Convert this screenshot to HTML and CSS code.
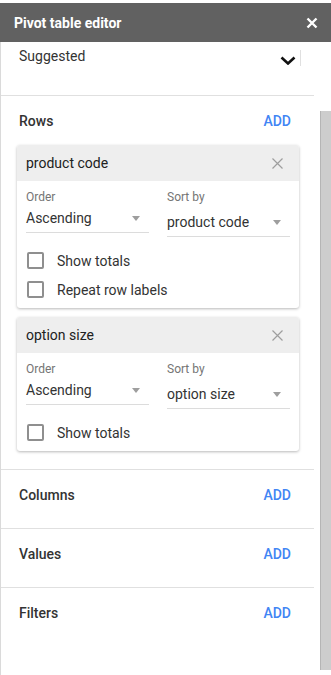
FILE: index.html
```html
<!DOCTYPE html>
<html lang="en">
<head>
  <meta charset="UTF-8">
  <meta name="viewport" content="width=device-width, initial-scale=1.0">
  <title>Pivot table editor</title>
  <link rel="stylesheet" href="styles.css">
</head>
<body>
  <div class="header">
    <span class="header-title">Pivot table editor</span>
    <svg class="header-close" width="12" height="12" viewBox="0 0 12 12">
      <path d="M1.5 1.5 L10.5 10.5 M10.5 1.5 L1.5 10.5" stroke="#fff" stroke-width="2.4" fill="none"/>
    </svg>
  </div>

  <div class="main">
    <div class="panel">
      <div class="suggested">
        <span class="suggested-text">Suggested</span>
        <svg class="chevron" width="16" height="9" viewBox="0 0 16 9">
          <path d="M1.5 1.5 L8 7.5 L14.5 1.5" stroke="#111" stroke-width="2.6" fill="none"/>
        </svg>
        <div class="vline"></div>
      </div>

      <div class="section section-rows">
        <div class="section-head">
          <span class="section-label">Rows</span>
          <span class="add">ADD</span>
        </div>

        <div class="cards">
          <div class="card">
            <div class="card-head">
              <span>product code</span>
              <svg width="11" height="11" viewBox="0 0 11 11">
                <path d="M0.5 0.5 L10.5 10.5 M10.5 0.5 L0.5 10.5" stroke="#9e9e9e" stroke-width="1.2" fill="none"/>
              </svg>
            </div>
            <div class="card-body">
              <div class="fields">
                <div class="field">
                  <div class="field-label">Order</div>
                  <div class="select">
                    <span>Ascending</span>
                    <span class="caret"></span>
                  </div>
                </div>
                <div class="field">
                  <div class="field-label">Sort by</div>
                  <div class="select select-low">
                    <span>product code</span>
                    <span class="caret"></span>
                  </div>
                </div>
              </div>
              <div class="checks">
                <label class="check"><span class="box"></span>Show totals</label>
                <label class="check"><span class="box"></span>Repeat row labels</label>
              </div>
            </div>
          </div>

          <div class="card">
            <div class="card-head">
              <span>option size</span>
              <svg width="11" height="11" viewBox="0 0 11 11">
                <path d="M0.5 0.5 L10.5 10.5 M10.5 0.5 L0.5 10.5" stroke="#9e9e9e" stroke-width="1.2" fill="none"/>
              </svg>
            </div>
            <div class="card-body">
              <div class="fields">
                <div class="field">
                  <div class="field-label">Order</div>
                  <div class="select">
                    <span>Ascending</span>
                    <span class="caret"></span>
                  </div>
                </div>
                <div class="field">
                  <div class="field-label">Sort by</div>
                  <div class="select select-low">
                    <span>option size</span>
                    <span class="caret"></span>
                  </div>
                </div>
              </div>
              <div class="checks">
                <label class="check"><span class="box"></span>Show totals</label>
              </div>
            </div>
          </div>
        </div>
      </div>

      <div class="section">
        <div class="section-head">
          <span class="section-label">Columns</span>
          <span class="add">ADD</span>
        </div>
      </div>
      <div class="section">
        <div class="section-head">
          <span class="section-label">Values</span>
          <span class="add">ADD</span>
        </div>
      </div>
      <div class="section section-last">
        <div class="section-head">
          <span class="section-label">Filters</span>
          <span class="add">ADD</span>
        </div>
      </div>
    </div>

    <div class="scrollbar">
      <div class="thumb"></div>
    </div>
  </div>
</body>
</html>
```

FILE: styles.css
```css
* {
  box-sizing: border-box;
}
body {
  margin: 0;
  padding-top: 3px;
  font-family: Roboto, "Liberation Sans", sans-serif;
  font-size: 14px;
  color: #222;
  background: #fff;
}
.header {
  height: 39px;
  background-color: #616161;
  display: flex;
  align-items: center;
  justify-content: space-between;
  padding: 0 13px 0 14px;
}
.header-title {
  color: #fff;
  font-weight: 700;
  font-size: 14px;
}
.header-close {
  margin-top: 1px;
}
.main {
  display: flex;
  height: 633px;
}
.panel {
  width: 314px;
  border-left: 1px solid #dadada;
}
.suggested {
  height: 54px;
  display: flex;
  align-items: flex-start;
  padding: 4px 13px 0 18px;
  border-bottom: 1px solid #e0e0e0;
}
.suggested-text {
  flex: 1;
  line-height: 20px;
  color: #333;
}
.chevron {
  margin-top: 10px;
}
.vline {
  width: 1px;
  height: 16px;
  margin-top: 4px;
  margin-left: 4px;
  background-color: #e0e0e0;
}
.section {
  padding: 15px 23px 23px 18px;
  border-bottom: 1px solid #e0e0e0;
}
.section-rows {
  padding-bottom: 18px;
}
.section-last {
  border-bottom: none;
}
.section-head {
  display: flex;
  justify-content: space-between;
  line-height: 20px;
}
.section-label {
  font-weight: 500;
  color: #333;
}
.add {
  font-weight: 500;
  color: #4285f4;
}
.cards {
  margin: 14px -8px 0 -2px;
  display: flex;
  flex-direction: column;
  gap: 9px;
}
.card {
  background: #fff;
  border-radius: 3px;
  box-shadow: 0 1px 3px rgba(0, 0, 0, 0.28);
  overflow: hidden;
}
.card-head {
  height: 36px;
  background-color: #eeeeee;
  display: flex;
  align-items: center;
  justify-content: space-between;
  padding: 0 16px 0 9px;
  color: #212121;
}
.card-body {
  padding: 8px 9px 4px 9px;
}
.fields {
  display: grid;
  grid-template-columns: 123px 123px;
  column-gap: 18px;
  align-items: start;
}
.field-label {
  font-size: 12px;
  line-height: 16px;
  color: #757575;
}
.select {
  margin-top: 3px;
  display: flex;
  align-items: center;
  justify-content: space-between;
  line-height: 20px;
  padding: 0 9px 4px 0;
  border-bottom: 1px solid #dcdcdc;
  color: #333;
}
.select-low {
  margin-top: 7px;
}
.caret {
  width: 0;
  height: 0;
  border-left: 4px solid transparent;
  border-right: 4px solid transparent;
  border-top: 5px solid #9e9e9e;
  margin-top: 1px;
}
.checks {
  margin-top: 9px;
}
.check {
  display: flex;
  align-items: center;
  height: 29px;
  color: #333;
}
.box {
  width: 17px;
  height: 17px;
  border: 2px solid #8f8f8f;
  border-radius: 2px;
  margin: 0 13px 0 1px;
}
.scrollbar {
  flex: 1;
  padding-left: 6px;
}
.thumb {
  margin-top: 69px;
  height: 559px;
  background-color: #cdcdcd;
  border-left: 1px solid #b5b5b5;
}
```
